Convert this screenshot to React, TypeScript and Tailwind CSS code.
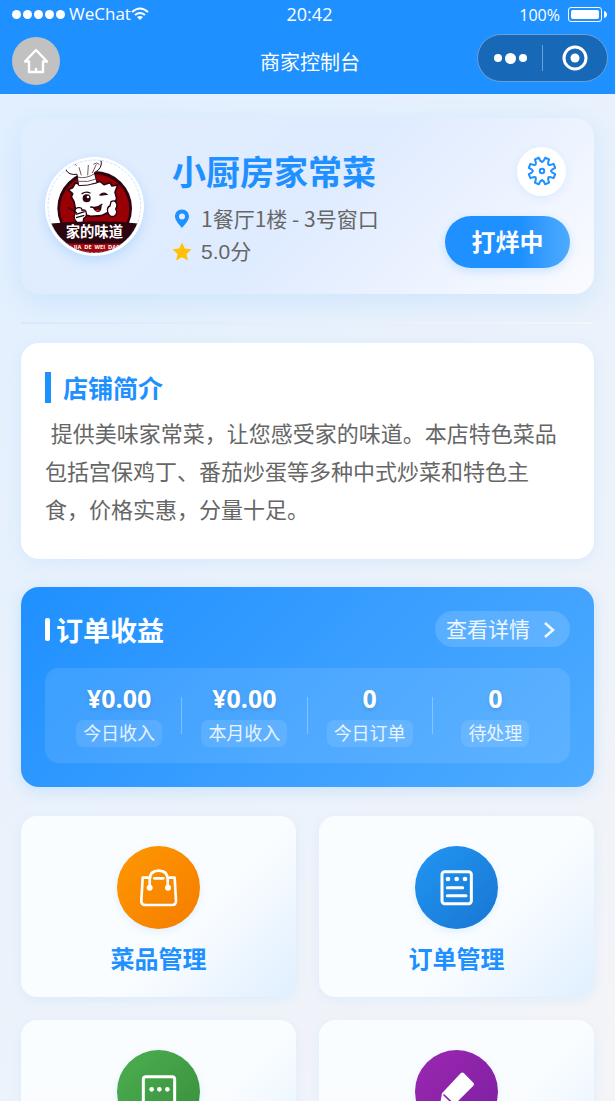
import React from "react";

const stats = [
  { value: "¥0.00", label: "今日收入" },
  { value: "¥0.00", label: "本月收入" },
  { value: "0", label: "今日订单" },
  { value: "0", label: "待处理" },
];

const BagIcon = () => (
  <svg viewBox="321 107 249 249" className="size-full" fill="none" stroke="white" strokeWidth="8" strokeLinecap="round" strokeLinejoin="round">
    <path d="M414 202h-16l-4 70q0 12 12 12h80q12 0 12-12l-4-70h-16" />
    <path d="M419 228v-20q0-27 27-27t27 27v20" />
    <path d="M433 204h27" />
    <circle cx="419" cy="232" r="5" fill="white" />
    <circle cx="474" cy="232" r="5" fill="white" />
  </svg>
);

const OrderIcon = () => (
  <svg viewBox="315 107 249 249" className="size-full" fill="none" stroke="white" strokeWidth="9" strokeLinecap="round">
    <rect x="396" y="184" width="88" height="96" rx="8" />
    <path d="M412 232h46M412 256h56" />
    <g fill="white" stroke="none">
      <circle cx="414" cy="206" r="7" />
      <circle cx="440" cy="206" r="7" />
      <circle cx="465" cy="206" r="7" />
    </g>
  </svg>
);

const MessageIcon = () => (
  <svg viewBox="321 720 249 249" className="size-full" fill="none" stroke="white" strokeWidth="9" strokeLinejoin="round">
    <path d="M408 800h78q8 0 8 8v72q0 8-8 8h-26l-13 14-13-14h-26q-8 0-8-8v-72q0-8 8-8z" />
    <g fill="white" stroke="none">
      <circle cx="425" cy="838" r="7" />
      <circle cx="448" cy="838" r="7" />
      <circle cx="472" cy="838" r="7" />
    </g>
  </svg>
);

const PencilIcon = () => (
  <svg viewBox="315 720 249 249" className="size-full" fill="white">
    <path d="M452 790q5-5 10 0l28 28q5 5 0 9l-61 61-38 11q-4 1-3-4l8-45z" />
    <path d="M402 855l26 25" stroke="#8b22a8" strokeWidth="5" strokeLinecap="round" />
  </svg>
);

const menus = [
  { name: "菜品管理", color: "bg-linear-135 from-[#ff9800] to-[#f57c00]", icon: <BagIcon /> },
  { name: "订单管理", color: "bg-linear-135 from-[#2196f3] to-[#1976d2]", icon: <OrderIcon /> },
  { name: "评价管理", color: "bg-linear-135 from-[#4caf50] to-[#388e3c]", icon: <MessageIcon /> },
  { name: "店铺编辑", color: "bg-linear-135 from-[#9c27b0] to-[#7b1fa2]", icon: <PencilIcon /> },
];

// Eight rounded teeth, two facing each side
const gearPoints = Array.from({ length: 8 }, (_, i) => 22.5 + i * 45)
  .flatMap((a) => [
    [a - 13, 10.5],
    [a - 9, 13.6],
    [a + 9, 13.6],
    [a + 13, 10.5],
    [a + 22.5, 9],
  ])
  .map(([a, r]) => {
    const rad = (a * Math.PI) / 180;
    return `${(15 + r * Math.cos(rad)).toFixed(2)},${(15 + r * Math.sin(rad)).toFixed(2)}`;
  })
  .join(" ");

const GearIcon = () => (
  <svg viewBox="0 0 30 30" className="size-[30px]" fill="none" stroke="#1e90ff" strokeWidth="2" strokeLinejoin="round">
    <polygon points={gearPoints} />
    <circle cx="15" cy="15" r="2.2" />
  </svg>
);

const ShopLogo = () => (
  <svg viewBox="15 18 297 297" className="size-[99px] shrink-0 rounded-full shadow-[0_4px_12px_rgba(30,144,255,0.2)]">
    <defs>
      <clipPath id="logo">
        <circle cx="163" cy="166" r="139" />
      </clipPath>
    </defs>
    <circle cx="163" cy="166" r="149" fill="white" />
    <g clipPath="url(#logo)">
      <circle cx="164" cy="172" r="112" fill="#2c0510" />
      <circle cx="164" cy="174" r="104" fill="#980006" />
      {/* Dumpling head */}
      <path
        d="M84 116l14-6 8-14 18 5 16-7 20 3 20-6 12 10 18-6 6 10 17-3-8 22 5 18-8 22-14 18-24 12-32 2-30-8-16-16-4-20-8-14 4-10z"
        fill="white" stroke="#2c0510" strokeWidth="5" strokeLinejoin="round"
      />
      <circle cx="140" cy="142" r="12" fill="#2c0510" />
      <circle cx="144" cy="138" r="4" fill="white" />
      <path d="M126 128q12-8 24-2M180 132q10-10 20-2l-17 2M152 168q20 5 34-8" fill="none" stroke="#2c0510" strokeWidth="4" strokeLinecap="round" />
      <path d="M157 168q14 3 28-6 1 16-8 21-12 2-20-15z" fill="#3c0510" />
      <path d="M166 178q9-5 14 1-5 6-14-1z" fill="#d02020" />
      {/* Hands */}
      <path d="M106 186q-4-14 8-16t12 8q11-4 13 8t-8 16l-2 14-18-2q-14-12-5-28z" fill="white" stroke="#2c0510" strokeWidth="4" />
      <path d="M108 190l26-8M108 200l25-7M84 169l27 17" stroke="#2c0510" strokeWidth="4" />
      <path d="M203 183q-3-15 7-18l3-13q12-7 17 6 3 9-3 16 8 14-4 21-14 6-20-12z" fill="white" stroke="#2c0510" strokeWidth="4" />
      {/* Chef hat */}
      <path
        d="M116 104l-5-34q-25 3-33-13-6-22 18-31 14-18 42-6 28-8 45 7 6 25-20 38l8 30q-28 10-55 9z"
        fill="white" stroke="#2c0510" strokeWidth="3"
      />
      <path d="M112 78q25 7 52-10M116 91q28 4 52-7M124 73l-7-24M143 73l2-31M157 66l12-26M88 42q12-10 22 2M160 40q10-8 18 0" fill="none" stroke="#2c0510" strokeWidth="2" />
      <path d="M20 219q143-16 290 0v100h-290z" fill="#2c0510" />
      <path d="M20 274q143 8 290 0v50h-290z" fill="#a3060c" />
      <text x="163" y="259" textAnchor="middle" fontSize="43" fontWeight="700" fill="white" className="font-['Noto_Sans_CJK_SC',sans-serif]">
        家的味道
      </text>
      <text x="101" y="293" fontSize="17" fontWeight="700" fill="white" xmlSpace="preserve" className="font-['Open_Sans',sans-serif]">
        JIA  DE  WEI  DAO
      </text>
    </g>
    <circle cx="163" cy="166" r="139" fill="none" stroke="#a9d4ff" strokeWidth="2" strokeDasharray="8 5" />
  </svg>
);

const App = () => {
  return (
    <div className="min-h-screen bg-linear-135 from-[#e0efff] to-[#f5f5f7] font-['Open_Sans','Noto_Sans_CJK_SC',sans-serif]">
      {/* Status bar and navigation */}
      <header className="sticky top-0 z-10 bg-[#1e90ff] text-white">
        <div className="grid h-7 grid-cols-3 items-center pr-2 pl-3">
          <div className="flex items-center text-[17px]">
            <div className="mr-1 flex gap-[2px]">
              {[1, 2, 3, 4, 5].map((dot) => (
                <span key={dot} className="size-[9px] rounded-full bg-white"></span>
              ))}
            </div>
            <span>WeChat</span>
            <svg viewBox="0 0 18 14" className="h-[14px] w-[18px]" fill="none" stroke="white" strokeWidth="2">
              <path d="M1 5q8-7 16 0M4 8q5-4 10 0" />
              <path d="M6 10q3-2 6 0l-3 3z" fill="white" stroke="none" />
            </svg>
          </div>
          <div className="text-center text-lg">20:42</div>
          <div className="flex items-center justify-end gap-2 pt-[2px]">
            <span className="text-base">100%</span>
            <svg viewBox="0 0 39 16" className="h-4 w-[39px]" fill="none">
              <rect x="0.5" y="0.5" width="33" height="14" rx="2.5" stroke="white" />
              <rect x="3" y="3" width="28" height="9" rx="2" fill="white" />
              <path d="M36 4q3 1 3 3.500t-3 3.500z" fill="white" />
            </svg>
          </div>
        </div>
        <div className="grid h-[66px] grid-cols-[1fr_auto_1fr] items-center pr-[7px] pl-3">
          <button aria-label="首页" className="flex size-12 items-center justify-center rounded-full bg-[#c1c1c1]">
            <svg viewBox="0 0 26 26" className="size-[26px]" fill="none" stroke="white" strokeWidth="2.4" strokeLinejoin="round" strokeLinecap="round">
              <path d="M13 2L2 13.500h4V24h14V13.500h4z" />
              <path d="M13 21v2" />
            </svg>
          </button>
          <h1 className="pt-1 text-xl">商家控制台</h1>
          <div className="mb-[6px] flex h-12 w-[131px] items-center justify-self-end rounded-full border border-[#6ba0d6] bg-[#1868b8]">
            <button aria-label="更多" className="flex h-full flex-1 items-center justify-center gap-[3px]">
              <span className="size-2 rounded-full bg-white"></span>
              <span className="size-[11px] rounded-full bg-white"></span>
              <span className="size-2 rounded-full bg-white"></span>
            </button>
            <span className="h-[26px] w-px bg-[#6ba0d6]"></span>
            <button aria-label="关闭" className="flex h-full flex-1 items-center justify-center">
              <svg viewBox="0 0 26 26" className="size-[26px]">
                <circle cx="13" cy="13" r="11" fill="none" stroke="white" strokeWidth="3" />
                <circle cx="13" cy="13" r="4.500" fill="white" />
              </svg>
            </button>
          </div>
        </div>
      </header>

      <main className="px-[21px] py-6">
        {/* Shop card */}
        <section className="flex h-44 items-center rounded-[20px] bg-linear-135 from-[#e1eefe] via-[#dfebff] to-[#fafbff] px-6 shadow-[0_8px_28px_rgba(30,144,255,0.12)]">
          <ShopLogo />
          <div className="ml-7 flex-1 pt-1 text-[21px] whitespace-nowrap text-[#666]">
            <h2 className="mb-[6px] text-[34px] leading-[48px] font-bold text-[#1e90ff]">小厨房家常菜</h2>
            <p className="flex h-[33px] items-center gap-[9px]">
              <svg viewBox="0 0 20 20" className="size-5" fill="#1e90ff">
                <path fillRule="evenodd" d="M10 0.500C5.800 0.500 3 3.500 3 7.500c0 4 4.500 8.500 7 11.500 2.500-3 7-7.500 7-11.500 0-4-2.800-7-7-7zM10 4.500a3 3 0 1 1 0 6 3 3 0 0 1 0-6z" />
              </svg>
              <span className="font-['Noto_Sans_CJK_SC',sans-serif]">1餐厅1楼 - 3号窗口</span>
            </p>
            <p className="flex h-[33px] items-center gap-[9px]">
              <svg viewBox="0 0 20 20" className="size-5" fill="#ffc107">
                <path d="M10 0.500l2.800 6 6.700 0.800-5 4.600 1.400 6.600-5.900-3.300-5.900 3.300 1.400-6.600-5-4.600 6.700-0.800z" />
              </svg>
              <span className="font-['Liberation_Sans','Noto_Sans_CJK_SC',sans-serif]">5.0分</span>
            </p>
          </div>
          <div className="flex flex-col items-end gap-5 pt-[2px]">
            <button aria-label="设置" className="mr-1 flex size-[49px] items-center justify-center rounded-full bg-white shadow-[0_2px_8px_rgba(30,144,255,0.1)]">
              <GearIcon />
            </button>
            <button className="h-[52px] w-[125px] rounded-full bg-linear-90 from-[#1e90ff] from-60% to-[#4dabff] text-2xl font-bold text-white shadow-[0_3px_10px_rgba(30,144,255,0.2)]">
              打烊中
            </button>
          </div>
        </section>

        <hr className="mt-7 mb-[19px] h-[2px] border-0 bg-linear-90 from-[#d9e8fd] to-[#f4f6f9]" />

        {/* Introduction */}
        <section className="rounded-[18px] bg-white px-6 pt-[29px] pb-[30px] shadow-[0_4px_16px_rgba(30,144,255,0.08)]">
          <h2 className="mb-[11px] flex h-[31px] items-center border-l-[6px] border-[#1e90ff] pt-[2px] pl-3 text-[25px] font-bold text-[#1e90ff]">店铺简介</h2>
          <p className="pb-px text-[22px] leading-[38px] whitespace-pre-wrap text-[#666]">
            {" 提供美味家常菜，让您感受家的味道。本店特色菜品包括宫保鸡丁、番茄炒蛋等多种中式炒菜和特色主食，价格实惠，分量十足。"}
          </p>
        </section>

        {/* Revenue */}
        <section className="mt-7 rounded-[18px] bg-linear-135 from-[#1e90ff] to-[#4dabff] p-6 text-white shadow-[0_4px_16px_rgba(30,144,255,0.16)]">
          <div className="flex items-center justify-between">
            <div className="flex items-center gap-[6px]">
              <span className="h-[23px] w-[5px] rounded-xs bg-white"></span>
              <h2 className="pt-1 text-[27px] leading-8 font-bold">订单收益</h2>
            </div>
            <button className="flex h-9 items-center gap-3 rounded-full bg-white/15 pt-[2px] pr-[14px] pl-[11px] text-[21px] text-white/90">
              查看详情
              <svg viewBox="0 0 14 18" className="h-[18px] w-[14px]" fill="none" stroke="currentColor" strokeWidth="2.600">
                <path d="M3 2l8 7-8 7" />
              </svg>
            </button>
          </div>
          <div className="mt-[21px] grid h-[95px] grid-cols-4 items-center rounded-[14px] bg-white/10 px-3">
            {stats.map((stat, i) => (
              <div key={stat.label} className="flex items-center">
                <div className="flex flex-1 flex-col items-center gap-2">
                  <span className="text-[25px] leading-7 font-bold [text-shadow:0_2px_4px_rgba(0,0,0,0.12)]">{stat.value}</span>
                  <span className="rounded-lg bg-white/10 px-[7px] text-lg leading-[27px] text-white/85">{stat.label}</span>
                </div>
                {i < stats.length - 1 && <span className="h-[37px] w-px bg-white/30"></span>}
              </div>
            ))}
          </div>
        </section>

        {/* Management entries */}
        <nav className="mt-[29px] grid grid-cols-2 gap-[23px]">
          {menus.map((menu) => (
            <a
              key={menu.name}
              href="#"
              className="flex h-[181px] flex-col items-center rounded-2xl bg-linear-135 from-[#fafdff] from-60% to-[#e0efff] pt-[30px] shadow-[0_3px_12px_rgba(30,144,255,0.07)]"
            >
              <span className={`size-[83px] rounded-full shadow-[0_3px_8px_rgba(30,144,255,0.12)] ${menu.color}`}>{menu.icon}</span>
              <span className="mt-3 text-2xl leading-9 font-bold text-[#1e90ff]">{menu.name}</span>
            </a>
          ))}
        </nav>
      </main>
    </div>
  );
};

export default App;
